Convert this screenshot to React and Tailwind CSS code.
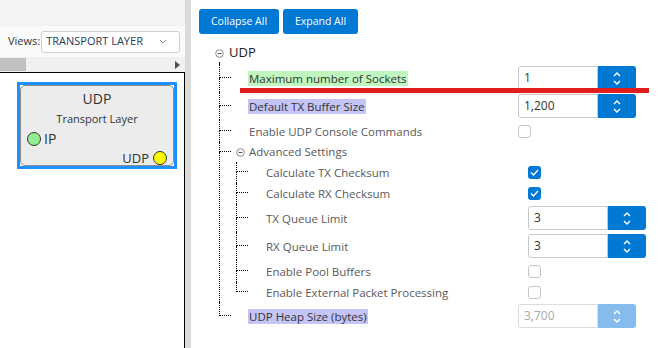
import React from 'react';

const font = { fontFamily: '"Open Sans", "Liberation Sans", sans-serif' };

const Minus = () => (
  <svg width="9" height="9" viewBox="0 0 9 9" className="shrink-0">
    <circle cx="4.5" cy="4.5" r="3.8" fill="white" stroke="#8a8a8a" strokeWidth="1" />
    <line x1="2.5" y1="4.5" x2="6.5" y2="4.5" stroke="#555" strokeWidth="1" />
  </svg>
);

const Spinner = ({ value, disabled }) => (
  <div className="flex h-[24px]">
    <div
      className={`flex w-[80px] items-center rounded-l-[3px] border pl-[5px] text-[12px] ${
        disabled ? 'border-[#dcdcdc] text-[#a8a8a8]' : 'border-[#c8c8c8] text-[#333]'
      }`}
    >
      {value}
    </div>
    <div
      className={`flex w-[38px] flex-col items-center justify-center gap-[3px] rounded-r-[3px] ${
        disabled ? 'bg-[#86bceb]' : 'bg-[#0078d4]'
      }`}
    >
      <svg width="8" height="5" viewBox="0 0 8 5">
        <polyline points="1,4 4,1 7,4" fill="none" stroke="white" strokeWidth="1.4" />
      </svg>
      <svg width="8" height="5" viewBox="0 0 8 5">
        <polyline points="1,1 4,4 7,1" fill="none" stroke="white" strokeWidth="1.4" />
      </svg>
    </div>
  </div>
);

const Check = ({ on }) =>
  on ? (
    <div className="flex h-[13px] w-[13px] items-center justify-center rounded-[3px] bg-[#0078d4]">
      <svg width="9" height="7" viewBox="0 0 9 7">
        <polyline points="1,3.5 3.5,6 8,1" fill="none" stroke="white" strokeWidth="1.4" />
      </svg>
    </div>
  ) : (
    <div className="h-[13px] w-[13px] rounded-[3px] border border-[#c4c4c4] bg-white" />
  );

const Label = ({ text, hl }) => (
  <span
    className={`px-[1px] leading-[19px] ${
      hl === 'green' ? 'bg-[#bff7bf] text-[#333]' : hl === 'blue' ? 'bg-[#c4c4f7] text-[#333]' : 'text-[#595959]'
    }`}
  >
    {text}
  </span>
);

// one tree row: dotted connector on the left, then label + control
const Row = ({ rowCls, topCls, last, labelCls, text, hl, control }) => (
  <div className="flex">
    <div className="flex w-[12px] shrink-0 flex-col">
      <div className={`${topCls} border-b border-l border-dotted border-black`} />
      {!last && <div className="flex-1 border-l border-dotted border-black" />}
    </div>
    <div className={`flex ${rowCls} items-center pl-[17px]`}>
      <div className={`${labelCls} shrink-0`}>
        <Label text={text} hl={hl} />
      </div>
      {control}
    </div>
  </div>
);

const advanced = [
  { text: 'Calculate TX Checksum', rowCls: 'h-[21px]', topCls: 'h-[10px]', control: <Check on /> },
  { text: 'Calculate RX Checksum', rowCls: 'h-[21px]', topCls: 'h-[10px]', control: <Check on /> },
  { text: 'TX Queue Limit', rowCls: 'h-[28px]', topCls: 'h-[14px]', control: <Spinner value="3" /> },
  { text: 'RX Queue Limit', rowCls: 'h-[28px]', topCls: 'h-[14px]', control: <Spinner value="3" /> },
  { text: 'Enable Pool Buffers', rowCls: 'h-[22px]', topCls: 'h-[11px]', control: <Check /> },
  { text: 'Enable External Packet Processing', rowCls: 'h-[20px]', topCls: 'h-[10px]', control: <Check />, last: true },
];

const UdpNode = () => (
  <div className="ml-[17px] mt-[9px] w-[160px] border-[3px] border-[#1e90ff]">
    <div className="flex h-[81px] flex-col rounded-[5px] border border-[#8c8c8c] bg-[#ececec] text-[#333]">
      <div className="mt-[4px] text-center text-[14px] leading-[18px]">UDP</div>
      <div className="mt-[3px] text-center text-[11px] leading-[15px]">Transport Layer</div>
      <div className="mt-[5px] flex items-center gap-[3px] pl-[6px]">
        <div className="h-[14px] w-[14px] rounded-full border border-[#333] bg-[#90ee90]" />
        <span className="text-[14px] leading-[16px]">IP</span>
      </div>
      <div className="mt-[3px] flex items-center justify-end gap-[4px] pr-[6px]">
        <span className="text-[13px] leading-[16px]">UDP</span>
        <div className="h-[14px] w-[14px] rounded-full border border-[#333] bg-[#ffff00]" />
      </div>
    </div>
  </div>
);

export default function App() {
  return (
    <div className="relative flex h-[348px] w-[667px] overflow-hidden bg-white" style={font}>
      {/* left: diagram pane */}
      <div className="flex w-[185px] shrink-0 flex-col">
        <div className="h-[26px] bg-[#f3f3f3]" />
        <div className="flex h-[31px] items-center bg-[#fafafa] pl-[8px]">
          <span className="text-[11px] text-[#333]">Views:</span>
          <div className="ml-[1px] flex h-[22px] w-[139px] items-center justify-between rounded-[3px] border border-[#cfcfcf] bg-white pl-[4px] pr-[12px]">
            <span className="text-[11px] text-[#2a3a5a]">TRANSPORT LAYER</span>
            <svg width="8" height="5" viewBox="0 0 8 5">
              <polyline points="1,1 4,4 7,1" fill="none" stroke="#888" strokeWidth="1" />
            </svg>
          </div>
        </div>
        <div className="flex h-[15px] items-center justify-between bg-[#f0f0f0]">
          <div className="h-[13px] w-[26px] bg-[#c1c1c1]" />
          <svg width="5" height="8" viewBox="0 0 5 8" className="mr-[5px]">
            <polygon points="0,0 5,4 0,8" fill="#505050" />
          </svg>
        </div>
        <div className="flex-1 border-r border-t border-black bg-white">
          <UdpNode />
        </div>
      </div>

      {/* splitter */}
      <div className="w-[6px] shrink-0 bg-[#dedad9]" />

      {/* right: property tree */}
      <div className="flex flex-1 flex-col text-[11.5px]">
        <div className="ml-[8px] mt-[9px] flex gap-[4px]">
          <button className="h-[25px] w-[80px] rounded-[3px] bg-[#0078d4] text-[10.5px] font-medium text-white">
            Collapse All
          </button>
          <button className="h-[25px] w-[75px] rounded-[3px] bg-[#0078d4] text-[10.5px] font-medium text-white">
            Expand All
          </button>
        </div>

        <div className="ml-[24px] mt-[10px] flex h-[18px] items-center gap-[5px]">
          <Minus />
          <span className="text-[13px] text-[#222]">UDP</span>
        </div>

        <div className="ml-[28px] flex flex-col">
          <div className="h-[2px] border-l border-dotted border-black" />
          <Row rowCls="h-[28px]" topCls="h-[14px]" labelCls="w-[270px]" text="Maximum number of Sockets" hl="green" control={<Spinner value="1" />} />
          <Row rowCls="h-[28px]" topCls="h-[14px]" labelCls="w-[270px]" text="Default TX Buffer Size" hl="blue" control={<Spinner value="1,200" />} />
          <Row rowCls="h-[22px]" topCls="h-[11px]" labelCls="w-[270px]" text="Enable UDP Console Commands" control={<Check />} />

          {/* Advanced Settings group */}
          <div className="flex">
            <div className="flex w-[12px] shrink-0 flex-col">
              <div className="h-[10px] border-b border-l border-dotted border-black" />
              <div className="flex-1 border-l border-dotted border-black" />
            </div>
            <div className="flex flex-col pl-[5px]">
              <div className="flex h-[20px] items-center gap-[4px]">
                <Minus />
                <span className="text-[#595959]">Advanced Settings</span>
              </div>
              <div className="flex flex-col">
                {advanced.map((r) => (
                  <Row key={r.text} {...r} labelCls="w-[263px]" />
                ))}
              </div>
            </div>
          </div>

          <Row rowCls="h-[28px]" topCls="h-[14px]" labelCls="w-[270px]" text="UDP Heap Size (bytes)" hl="blue" control={<Spinner value="3,700" disabled />} last />
        </div>
      </div>

      {/* red annotation stroke */}
      <div className="absolute left-[240px] top-[88px] h-[5px] w-[409px] bg-[#e11d1d]" />
    </div>
  );
}
